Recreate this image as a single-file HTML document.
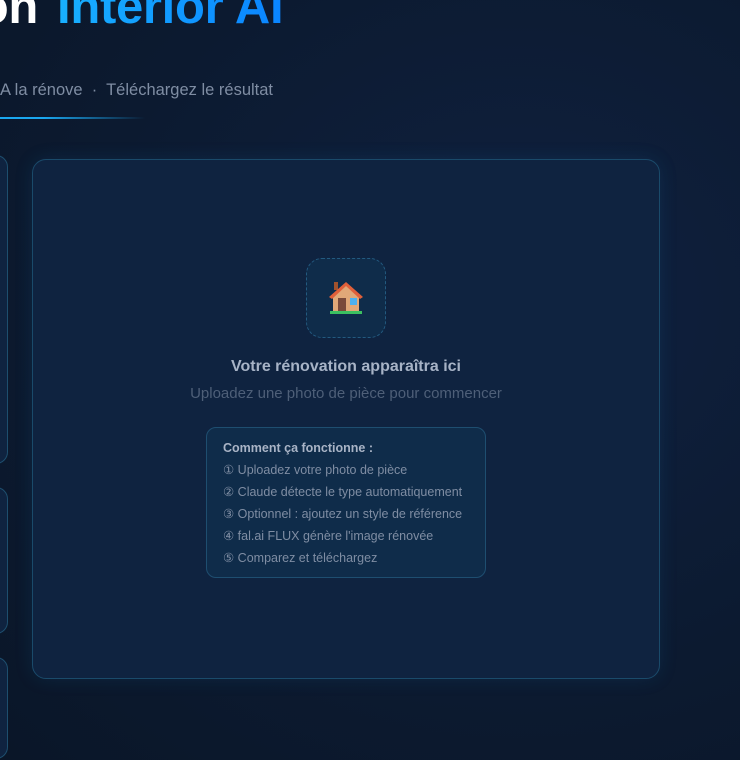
<!DOCTYPE html>
<html style="overflow:hidden"><head><meta charset="utf-8"><style>
html,body{margin:0;width:740px;height:760px;overflow:hidden}
body{background:radial-gradient(ellipse at 70% 40%,#0f2140 0%,#0c1a30 60%,#0a1628 100%);font-family:"Liberation Sans",sans-serif;position:relative}
.t{position:absolute;font-weight:bold;font-size:49px;line-height:48px;top:-17px;white-space:nowrap;letter-spacing:-0.3px}
.sub{position:absolute;left:0;top:81px;font-size:16.5px;color:#7f8da3;white-space:nowrap}
.line{position:absolute;left:0;top:117px;width:145px;height:2px;background:linear-gradient(90deg,#1aa7ef,#1aa7ef 30%,rgba(26,100,200,0))}
.lp{position:absolute;left:-20px;width:26px;border:1px solid #1d4e6e;border-radius:12px;background:#0f2340}
.main{position:absolute;left:32px;top:159px;width:626px;height:518px;border:1px solid #1a4a6a;border-radius:14px;background:#0f2340;box-shadow:0 0 18px rgba(20,120,180,.15)}
.ic{position:absolute;left:273px;top:98px;width:78px;height:78px;border:1px dashed #235a80;border-radius:16px;background:#0f2c4a;display:flex;align-items:center;justify-content:center}
.h{position:absolute;left:0;width:100%;text-align:center;top:198px;font-size:16px;font-weight:bold;color:#a7b3c6}
.s{position:absolute;left:0;width:100%;text-align:center;top:225px;font-size:15px;color:#4e5f78}
.box{position:absolute;left:173px;top:267px;width:280px;height:151px;border:1px solid #1e4e70;border-radius:10px;background:#0f2c4a;padding:0 0 0 16px;box-sizing:border-box}
.box div{font-size:12.5px;color:#7f8da3;height:22px;line-height:22px;white-space:nowrap}
.box .b{font-weight:bold;color:#a9b4c6;margin-top:9px}
</style></head><body>
<div class="t" style="right:702px;color:#fff">Rénovation</div>
<div class="t" style="left:57px;background:linear-gradient(90deg,#18b0ff,#0a84ff);-webkit-background-clip:text;color:transparent">Interior AI</div>
<div class="sub">A la rénove &nbsp;·&nbsp; Téléchargez le résultat</div>
<div class="line"></div>
<div class="lp" style="top:155px;height:307px"></div>
<div class="lp" style="top:487px;height:145px"></div>
<div class="lp" style="top:657px;height:100px"></div>
<div class="main">
<div class="ic">
<svg width="38" height="36" viewBox="0 0 38 36"><rect x="7" y="2" width="4" height="8" fill="#a0522d"/><path d="M6 16 L19 4 L32 16 V32 H6Z" fill="#e0a878"/><path d="M2 17 L19 2 L36 17 L33 19 L19 6 L5 19Z" fill="#e0603a"/><rect x="11" y="18" width="8" height="14" fill="#7a4a3a"/><rect x="23" y="18" width="7" height="7" fill="#4ab0f0"/><rect x="3" y="31" width="32" height="3" fill="#3cc060"/></svg>
</div>
<div class="h">Votre rénovation apparaîtra ici</div>
<div class="s">Uploadez une photo de pièce pour commencer</div>
<div class="box">
<div class="b">Comment ça fonctionne :</div>
<div>① Uploadez votre photo de pièce</div>
<div>② Claude détecte le type automatiquement</div>
<div>③ Optionnel : ajoutez un style de référence</div>
<div>④ fal.ai FLUX génère l'image rénovée</div>
<div>⑤ Comparez et téléchargez</div>
</div>
</div>
</body></html>
